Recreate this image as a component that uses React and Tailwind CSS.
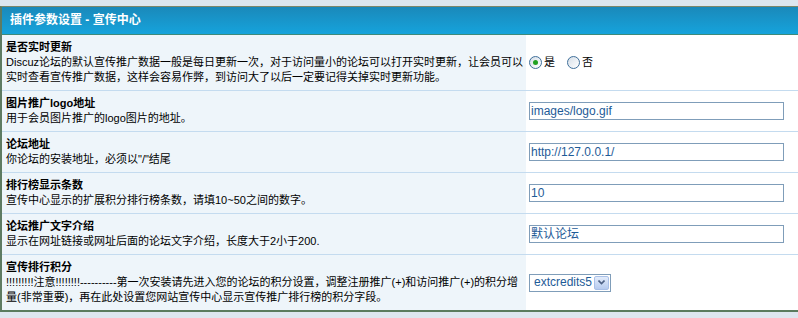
import React from 'react';

const rows = [
  {
    title: '是否实时更新',
    desc: 'Discuz论坛的默认宣传推广数据一般是每日更新一次，对于访问量小的论坛可以打开实时更新，让会员可以实时查看宣传推广数据，这样会容易作弊，到访问大了以后一定要记得关掉实时更新功能。',
    kind: 'radio',
  },
  { title: '图片推广logo地址', desc: '用于会员图片推广的logo图片的地址。', kind: 'text', value: 'images/logo.gif' },
  { title: '论坛地址', desc: '你论坛的安装地址，必须以"/"结尾', kind: 'text', value: 'http://127.0.0.1/' },
  { title: '排行榜显示条数', desc: '宣传中心显示的扩展积分排行榜条数，请填10~50之间的数字。', kind: 'text', value: '10' },
  { title: '论坛推广文字介绍', desc: '显示在网址链接或网址后面的论坛文字介绍，长度大于2小于200.', kind: 'text', value: '默认论坛' },
  {
    title: '宣传排行积分',
    desc: '!!!!!!!!!注意!!!!!!!!----------第一次安装请先进入您的论坛的积分设置，调整注册推广(+)和访问推广(+)的积分增量(非常重要)，再在此处设置您网站宣传中心显示宣传推广排行榜的积分字段。',
    kind: 'select',
    value: 'extcredits5',
  },
];

function Radio({ checked, label }) {
  return (
    <label className="flex items-center gap-[2px]">
      <span className="w-[13px] h-[13px] rounded-full border border-[#3f6f9a] bg-gradient-to-br from-[#d6dfe8] to-white flex items-center justify-center">
        {checked && <span className="w-[5px] h-[5px] rounded-full bg-[#21a121]" />}
      </span>
      <span>{label}</span>
    </label>
  );
}

function Field({ row }) {
  if (row.kind === 'radio') {
    return (
      <div className="flex items-center gap-[12px]">
        <Radio checked label="是" />
        <Radio label="否" />
      </div>
    );
  }
  if (row.kind === 'select') {
    return (
      <div className="w-[82px] h-[18px] border border-[#7f9db9] bg-white flex items-center justify-between pl-[4px] pr-[1px] text-[#1e5b97] text-[12px] font-['Liberation_Sans',Arial,sans-serif]">
        <span>{row.value}</span>
        <span className="w-[15px] h-[14px] bg-gradient-to-b from-[#e3ecfb] to-[#b6cbef] border border-[#a9c0e8] rounded-[2px] flex items-center justify-center">
          <svg width="7" height="5" viewBox="0 0 7 5">
            <path d="M0.5 0.5 L3.5 3.5 L6.5 0.5" fill="none" stroke="#4d6185" strokeWidth="1.6" />
          </svg>
        </span>
      </div>
    );
  }
  return (
    <div className="w-[255px] h-[18px] border border-[#7f9db9] bg-white flex items-center pl-[1px] text-[#1e5b97] text-[12px] font-['Liberation_Sans','Noto_Sans_CJK_SC',Arial,sans-serif]">
      {row.value}
    </div>
  );
}

export default function App() {
  return (
    <div className="w-[798px] h-[318px] bg-[#dde6ef] pt-[6px] overflow-hidden font-['Liberation_Sans','Noto_Sans_CJK_SC',sans-serif] text-[11px] leading-[15px] text-black">
      <div className="bg-white border-l-2 border-l-[#5e7b62] border-t border-t-[#7d876b] border-b-2 border-b-[#5a7b5e]">
        <div className="h-[28px] bg-gradient-to-b from-[#1a89ba] to-[#15a3dc] border-b border-b-[#3d8a7a] flex items-center pl-[8px] text-white font-bold text-[12px]">
          插件参数设置 - 宣传中心
        </div>
        {rows.map((row, i) => (
          <div
            key={i}
            className={`grid grid-cols-[524px_1fr] ${i < rows.length - 1 ? 'border-b border-b-[#c4dbef]' : ''}`}
          >
            <div className="bg-[#eef5fa] py-[5px] pl-[4px] pr-[2px]">
              <div className="font-bold">{row.title}</div>
              <div>{row.desc}</div>
            </div>
            <div className="flex items-center pl-[3px]">
              <Field row={row} />
            </div>
          </div>
        ))}
      </div>
    </div>
  );
}
